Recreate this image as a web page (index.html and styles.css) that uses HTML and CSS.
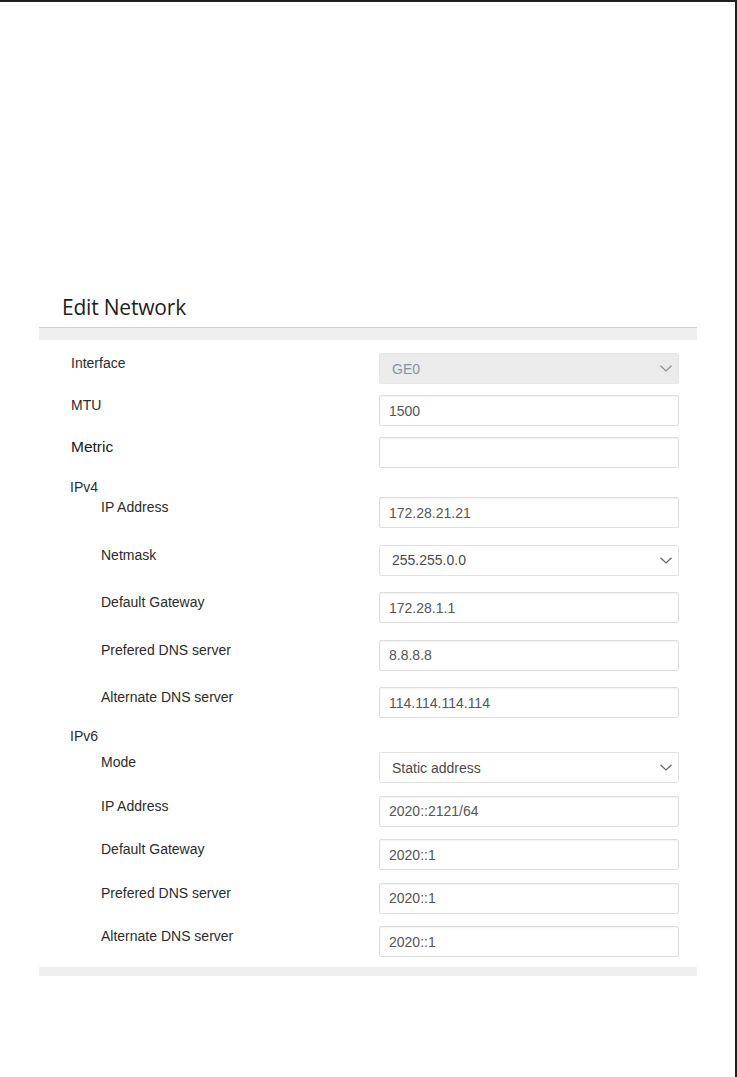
FILE: index.html
```html
<!DOCTYPE html>
<html lang="en">
<head>
<meta charset="utf-8">
<title>Edit Network</title>
<link rel="stylesheet" href="styles.css">
</head>
<body>
<div class="page">
  <div class="panel">
    <h1 class="title">Edit Network</h1>
    <div class="band band-top"></div>
    <div class="form">
      <div class="group group-top">
        <div class="row">
          <div class="label">Interface</div>
          <div class="control select disabled">
            <span>GE0</span>
            <svg class="chev" width="12" height="7" viewBox="0 0 12 7"><path d="M0.5 0.8 L6 6 L11.5 0.8" fill="none" stroke="#8a8f96" stroke-width="1.2"/></svg>
          </div>
        </div>
        <div class="row">
          <div class="label">MTU</div>
          <div class="control input">1500</div>
        </div>
        <div class="row">
          <div class="label label-lg">Metric</div>
          <div class="control input"></div>
        </div>
      </div>

      <div class="section-head head-v4">IPv4</div>
      <div class="group group-v4">
        <div class="row">
          <div class="label sub">IP Address</div>
          <div class="control input">172.28.21.21</div>
        </div>
        <div class="row">
          <div class="label sub">Netmask</div>
          <div class="control select">
            <span>255.255.0.0</span>
            <svg class="chev" width="12" height="7" viewBox="0 0 12 7"><path d="M0.5 0.8 L6 6 L11.5 0.8" fill="none" stroke="#666" stroke-width="1.2"/></svg>
          </div>
        </div>
        <div class="row">
          <div class="label sub">Default Gateway</div>
          <div class="control input">172.28.1.1</div>
        </div>
        <div class="row">
          <div class="label sub">Prefered DNS server</div>
          <div class="control input">8.8.8.8</div>
        </div>
        <div class="row">
          <div class="label sub">Alternate DNS server</div>
          <div class="control input">114.114.114.114</div>
        </div>
      </div>

      <div class="section-head head-v6">IPv6</div>
      <div class="group group-v6">
        <div class="row">
          <div class="label sub">Mode</div>
          <div class="control select">
            <span>Static address</span>
            <svg class="chev" width="12" height="7" viewBox="0 0 12 7"><path d="M0.5 0.8 L6 6 L11.5 0.8" fill="none" stroke="#666" stroke-width="1.2"/></svg>
          </div>
        </div>
        <div class="row">
          <div class="label sub">IP Address</div>
          <div class="control input">2020::2121/64</div>
        </div>
        <div class="row">
          <div class="label sub">Default Gateway</div>
          <div class="control input">2020::1</div>
        </div>
        <div class="row">
          <div class="label sub">Prefered DNS server</div>
          <div class="control input">2020::1</div>
        </div>
        <div class="row">
          <div class="label sub">Alternate DNS server</div>
          <div class="control input">2020::1</div>
        </div>
      </div>
    </div>
    <div class="band band-bottom"></div>
  </div>
</div>
</body>
</html>
```

FILE: styles.css
```css
* { box-sizing: border-box; }

html, body {
  margin: 0;
  padding: 0;
  background: #ffffff;
}

.page {
  width: 737px;
  height: 1077px;
  border-top: 2px solid #1f1f1f;
  border-right: 2px solid #1f1f1f;
  background: #ffffff;
  overflow: hidden;
}

.panel {
  margin-left: 39px;
  width: 658px;
  padding-top: 291px;
}

.title {
  margin: 0 0 6px 0;
  padding-left: 23px;
  font-family: "Open Sans", "Noto Sans", sans-serif;
  font-weight: 400;
  font-size: 21px;
  line-height: 28px;
  letter-spacing: -0.2px;
  color: #1e1e1e;
}

.band {
  background: #efefef;
}

.band-top {
  height: 13px;
  border-top: 1px solid #cfcfcf;
}

.band-bottom {
  height: 9px;
  margin-top: 10px;
}

.form {
  padding-top: 13px;
  font-family: "Liberation Sans", Arial, sans-serif;
}

.group {
  display: flex;
  flex-direction: column;
}

.group-top { gap: 11px; }
.group-v4 { gap: 16.5px; margin-top: 2px; }
.group-v6 { gap: 12.5px; margin-top: 8px; }

.section-head {
  padding-left: 31px;
  font-size: 14px;
  line-height: 16px;
  color: #2b2b2b;
}

.head-v4 { margin-top: 11px; }
.head-v6 { margin-top: 10px; }

.row {
  display: flex;
  align-items: flex-start;
  height: 31px;
}

.label {
  width: 340px;
  padding-left: 32px;
  padding-top: 2px;
  font-size: 14px;
  line-height: 16px;
  color: #2b2b2b;
}

.label.sub {
  padding-left: 62px;
}

.label-lg {
  font-size: 15.5px;
  color: #1a1a1a;
}

.control {
  width: 300px;
  height: 31px;
  display: flex;
  align-items: center;
  font-size: 14px;
  border-radius: 2px;
}

.input {
  border: 1px solid #dedede;
  box-shadow: inset 0 1px 2px rgba(0, 0, 0, 0.06);
  padding-left: 9px;
  color: #555555;
  background: #ffffff;
}

.select {
  justify-content: space-between;
  padding-left: 12px;
  padding-right: 6px;
  border: 1px solid #e2e2e2;
  background: #ffffff;
  color: #4a4a4a;
}

.select.disabled {
  background: #ebebeb;
  border-color: #e6e6e6;
  color: #8796a6;
}

.chev {
  display: block;
}
```
